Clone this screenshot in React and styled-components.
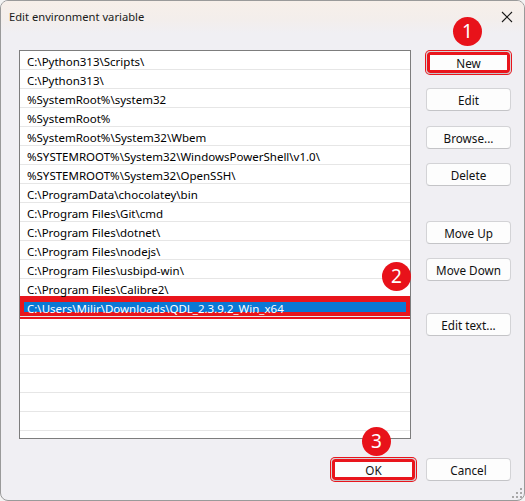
import React from 'react'
import styled, { createGlobalStyle } from 'styled-components'

const paths = [
  'C:\\Python313\\Scripts\\',
  'C:\\Python313\\',
  '%SystemRoot%\\system32',
  '%SystemRoot%',
  '%SystemRoot%\\System32\\Wbem',
  '%SYSTEMROOT%\\System32\\WindowsPowerShell\\v1.0\\',
  '%SYSTEMROOT%\\System32\\OpenSSH\\',
  'C:\\ProgramData\\chocolatey\\bin',
  'C:\\Program Files\\Git\\cmd',
  'C:\\Program Files\\dotnet\\',
  'C:\\Program Files\\nodejs\\',
  'C:\\Program Files\\usbipd-win\\',
  'C:\\Program Files\\Calibre2\\',
  'C:\\Users\\Milir\\Downloads\\QDL_2.3.9.2_Win_x64',
]

const rows = [...paths, ...Array(8).fill('')]

const sideButtons = [
  { label: 'New', marked: true, space: 0 },
  { label: 'Edit', space: 14 },
  { label: 'Browse...', space: 15 },
  { label: 'Delete', space: 14 },
  { label: 'Move Up', space: 35 },
  { label: 'Move Down', space: 14 },
  { label: 'Edit text...', space: 32 },
]

function App() {
  return (
    <>
      <GlobalStyle />
      <Window>
        <TitleBar>
          <Title>Edit environment variable</Title>
          <CloseButton>
            <svg width="12" height="12" viewBox="0 0 12 12">
              <path d="M1 1 L11 11 M11 1 L1 11" stroke="#1b1b1b" strokeWidth="1.1" fill="none" />
            </svg>
          </CloseButton>
        </TitleBar>

        <Main>
          <ListBox>
            {rows.map((text, i) => (
              <Row key={i} $selected={i === 13}>
                {text}
              </Row>
            ))}
          </ListBox>
          <ButtonColumn>
            {sideButtons.map((b) => (
              <Button key={b.label} $marked={b.marked} $space={b.space}>
                {b.label}
              </Button>
            ))}
          </ButtonColumn>
        </Main>

        <Footer>
          <Button $marked>OK</Button>
          <Button>Cancel</Button>
        </Footer>

        <Badge $x={467} $y={31}>1</Badge>
        <Badge $x={396} $y={276}>2</Badge>
        <Badge $x={376} $y={441}>3</Badge>

        <Grip>
          <svg width="10" height="10" viewBox="0 0 10 10">
            <g fill="#a8a8a8">
              <rect x="8" y="0" width="2" height="2" />
              <rect x="4" y="4" width="2" height="2" />
              <rect x="8" y="4" width="2" height="2" />
              <rect x="0" y="8" width="2" height="2" />
              <rect x="4" y="8" width="2" height="2" />
              <rect x="8" y="8" width="2" height="2" />
            </g>
          </svg>
        </Grip>
      </Window>
    </>
  )
}

export default App

const GlobalStyle = createGlobalStyle`
  html, body {
    margin: 0;
    padding: 0;
    background: #f3f3f3;
  }
  * {
    box-sizing: border-box;
  }
`

const Window = styled.div`
  position: relative;
  width: 525px;
  height: 501px;
  border: 1px solid #9a9a9a;
  border-radius: 8px;
  background: #f0eff3;
  display: flex;
  flex-direction: column;
  overflow: hidden;
  font-family: "Noto Sans", "Open Sans", sans-serif;
  font-size: 12px;
  color: #000;
`

const TitleBar = styled.div`
  height: 32px;
  flex: none;
  display: flex;
  align-items: center;
  justify-content: space-between;
  padding: 0 8px 0 8px;
  background: linear-gradient(180deg, #f7efe9 0%, #f3eeec 60%, #f0eff3 100%);
`

const Title = styled.div`
  font-size: 11.2px;
  color: #1a1a1a;
  margin-bottom: 1px;
`

const CloseButton = styled.div`
  width: 16px;
  height: 16px;
  display: flex;
  align-items: center;
  justify-content: center;
  margin-right: 1px;
`

const Main = styled.div`
  flex: 1;
  display: flex;
  gap: 15px;
  padding: 17px 13px 0 18px;
  min-height: 0;
`

const ListBox = styled.div`
  width: 392px;
  height: 389px;
  flex: none;
  background: #fff;
  border: 1px solid #7d7d7d;
  overflow: hidden;
`

const Row = styled.div`
  height: 19px;
  padding: 3px 0 0 7px;
  line-height: 15px;
  font-size: 11.5px;
  border-bottom: 1px solid #e6e6e6;
  white-space: nowrap;
  color: ${(p) => (p.$selected ? '#fff' : '#000')};
  background: ${(p) => (p.$selected ? '#0a78d4' : 'transparent')};
  box-shadow: ${(p) =>
    p.$selected ? 'inset 0 0 0 4px #e9151c, 0 0 0 2px #e9151c' : 'none'};
`

const ButtonColumn = styled.div`
  width: 85px;
  display: flex;
  flex-direction: column;
  padding-top: 1px;
`

const Button = styled.div`
  width: 85px;
  height: 23px;
  flex: none;
  margin-top: ${(p) => p.$space || 0}px;
  display: flex;
  align-items: center;
  justify-content: center;
  background: #fdfdfd;
  border: 1px solid #d3d3d6;
  border-bottom-color: #c4c4c7;
  border-radius: 4px;
  font-size: 11.7px;
  color: #111;
  box-shadow: ${(p) =>
    p.$marked ? 'inset 0 0 0 3px #e9151c, 0 0 0 1px #e9151c' : 'none'};
`

const Footer = styled.div`
  height: 62px;
  flex: none;
  display: flex;
  justify-content: flex-end;
  align-items: flex-start;
  gap: 10px;
  padding: 20px 13px 0 0;
`

const Badge = styled.div`
  position: absolute;
  left: ${(p) => p.$x - 15}px;
  top: ${(p) => p.$y - 15}px;
  width: 29px;
  height: 29px;
  border-radius: 50%;
  background: #e8121a;
  color: #fff;
  display: flex;
  align-items: center;
  justify-content: center;
  font-family: "Noto Sans", sans-serif;
  font-size: 19px;
  line-height: 1;
`

const Grip = styled.div`
  position: absolute;
  right: 2px;
  bottom: 2px;
  width: 10px;
  height: 10px;
  display: flex;
`
